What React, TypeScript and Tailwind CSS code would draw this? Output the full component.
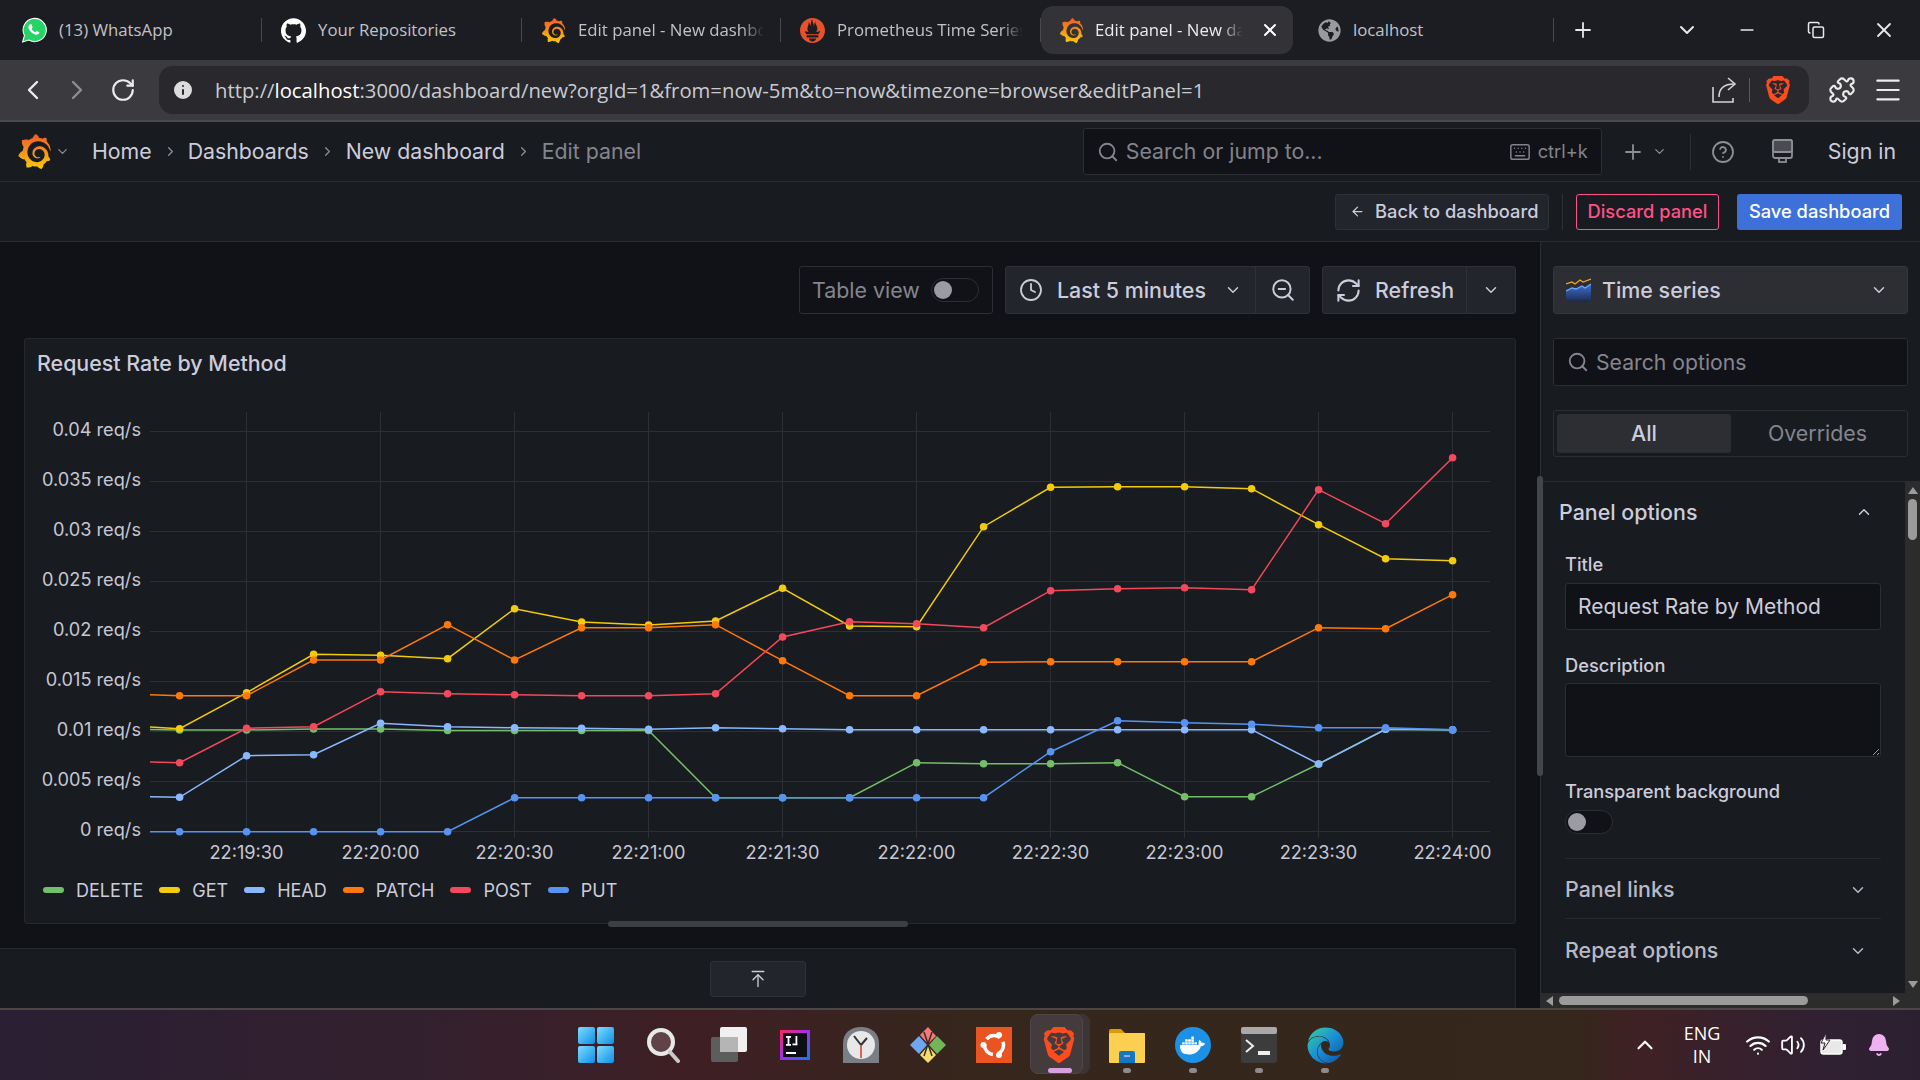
import React from "react";
import { ChevronDown, ChevronLeft, ChevronRight, ChevronUp, RotateCw, Plus, Minus, X, Search, Keyboard, CircleHelp, Puzzle, Menu, Clock, ZoomOut, RefreshCw, ArrowLeft, ArrowUpToLine, Wifi, Volume2, Bell, Info, Copy } from "lucide-react";
import { SiGrafana, SiPrometheus, SiBrave, SiDocker, SiGithub } from "react-icons/si";
import { FaEdge, FaGlobeAmericas } from "react-icons/fa";

const X0 = 179.6;
const DX = 67;
type Series = { name: string; color: string; start: number; ys: number[] };
const series: Series[] = [
  { name: "DELETE", color: "#73bf69", start: 729.5, ys: [730, 730, 729, 729, 730.5, 730.5, 730.5, 730.5, 797.7, 797.7, 797.7, 762.7, 763.7, 763.7, 762.7, 796.7, 796.7, 764, 729.3, 730] },
  { name: "GET", color: "#f2cc0c", start: 727, ys: [728.7, 692.7, 654.3, 655.3, 658.7, 608.7, 622, 625, 621, 588.3, 626, 626.7, 526.7, 487.3, 486.7, 486.7, 488.7, 524.7, 558.7, 560.7] },
  { name: "HEAD", color: "#8ab8ff", start: 796.7, ys: [797.3, 755.7, 754.7, 723.3, 726.7, 727.7, 728.3, 729.3, 727.7, 728.7, 729.7, 729.7, 729.7, 729.7, 729.7, 729.7, 729.7, 764, 729.3, 729.7] },
  { name: "PATCH", color: "#ff780a", start: 694.7, ys: [695.7, 695.7, 660, 660, 624.7, 660, 627.7, 627.7, 624.7, 660.7, 695.7, 695.7, 662.3, 661.7, 661.7, 661.7, 661.7, 627.7, 628.7, 594.7] },
  { name: "POST", color: "#f2495c", start: 762, ys: [762.7, 728.3, 726.7, 691.7, 693.7, 694.7, 695.7, 695.7, 693.7, 637, 621.7, 623.7, 627.7, 590.7, 588.7, 587.7, 589.7, 489.7, 523.7, 457.7] },
  { name: "PUT", color: "#5794f2", start: 831.7, ys: [831.7, 831.7, 831.7, 831.7, 831.7, 797.7, 797.7, 797.7, 797.7, 797.7, 797.7, 797.7, 797.7, 751.7, 720.7, 722.7, 724.3, 727.7, 727.7, 729.7] },
];
const yLabels = ["0.04 req/s", "0.035 req/s", "0.03 req/s", "0.025 req/s", "0.02 req/s", "0.015 req/s", "0.01 req/s", "0.005 req/s", "0 req/s"];
const xLabels = ["22:19:30", "22:20:00", "22:20:30", "22:21:00", "22:21:30", "22:22:00", "22:22:30", "22:23:00", "22:23:30", "22:24:00"];

function Chart() {
  return (
    <svg width={1489} height={470} viewBox="25 400 1489 470" className="block">
      {yLabels.map((l, i) => {
        const y = 431.5 + i * 50;
        return (
          <g key={l}>
            <line x1={150} x2={1490} y1={y} y2={y} stroke="#2c2f33" strokeWidth={1} />
            <text x={141} y={y + 4} textAnchor="end" fontSize={18.2} fill="#c7c7d3" fontFamily="Inter">{l}</text>
          </g>
        );
      })}
      {xLabels.map((l, i) => {
        const x = 246.5 + i * 134;
        return (
          <g key={l}>
            <line x1={x} x2={x} y1={412} y2={838} stroke="#2c2f33" strokeWidth={1} />
            <text x={x} y={859} textAnchor="middle" fontSize={18.2} fill="#c7c7d3" fontFamily="Inter">{l}</text>
          </g>
        );
      })}
      {series.map((s) => {
        const pts = [`150,${s.start}`, ...s.ys.map((y, i) => `${X0 + i * DX},${y}`)].join(" ");
        return (
          <g key={s.name}>
            <polyline points={pts} fill="none" stroke={s.color} strokeWidth={1.5} />
            {s.ys.map((y, i) => <circle key={i} cx={X0 + i * DX} cy={y} r={3.8} fill={s.color} />)}
          </g>
        );
      })}
    </svg>
  );
}

function GrafanaLogo({ size }: { size: number }) {
  return <SiGrafana size={size} className="shrink-0 fill-[url(#grafgrad)]" />;
}

function WhatsAppIcon() {
  return (
    <svg width="26" height="26" viewBox="0 0 24 24">
      <path d="M1.5 23l1.7-6A10.7 10.7 0 1 1 7.2 21.2z" fill="#25d366" stroke="#fff" strokeWidth="1" />
      <path d="M9 6.6c-.6 0-1.1.3-1.5.8-.7.9-.9 2-.4 3.3.8 2.2 2.5 4 4.8 5.1 1.8.8 3.2.7 4.2-.1.5-.4.8-1 .8-1.6l-2.5-1.3-1.1 1.2c-1.5-.5-2.8-1.7-3.5-3.2l.9-1.1L9.8 6.8z" fill="#fff" />
    </svg>
  );
}

function Tab({ icon, label, w, fade, first }: { icon: React.ReactNode; label: string; w: string; fade?: boolean; first?: boolean }) {
  return (
    <div className={`${w} h-full flex items-center relative`}>
      <div className={`w-[68px] shrink-0 flex items-center ${first ? "pl-[21px]" : "pl-[19px]"}`}>{icon}</div>
      <div className={`text-[16.8px] text-[#c2c2c6] whitespace-nowrap overflow-hidden w-[186px] ${first ? "-ml-[9px]" : "-ml-[12px]"} ${fade ? "[mask-image:linear-gradient(to_right,black_88%,transparent)]" : ""}`}>{label}</div>
      <div className="absolute right-0 top-[18px] h-[24px] w-px bg-[#48484c]" />
    </div>
  );
}

function LegendItem({ color, name }: { color: string; name: string }) {
  return (
    <div className="flex items-center gap-[12px]">
      <span className="w-[21px] h-[6px] rounded-full" style={{ backgroundColor: color }} />
      <span>{name}</span>
    </div>
  );
}

function TbIcon({ children }: { children: React.ReactNode }) {
  return <div className="w-[66.3px] h-full flex items-center justify-center relative shrink-0">{children}</div>;
}
const Dot = () => <span className="absolute left-1/2 -ml-[4px] top-[58px] w-[8px] h-[5px] rounded-full bg-[#8f8a8c]" />;

function Taskbar() {
  return (
    <div className="h-[72px] shrink-0 border-t-2 border-[#4c4646] flex items-center pl-[563px] bg-[linear-gradient(90deg,#2a1f33_0%,#33202e_22%,#3e1f24_36%,#36261c_50%,#35271b_82%,#3f2124_85%,#302032_95%,#2c2030_100%)]">
      <TbIcon>
        <svg width="36" height="36" viewBox="0 0 36 36"><defs><linearGradient id="wing" x1="0" y1="0" x2="1" y2="1"><stop offset="0" stopColor="#7ddcff" /><stop offset="1" stopColor="#0f8fe8" /></linearGradient></defs><rect x="0" y="0" width="17" height="17" rx="2" fill="url(#wing)" /><rect x="19" y="0" width="17" height="17" rx="2" fill="url(#wing)" /><rect x="0" y="19" width="17" height="17" rx="2" fill="url(#wing)" /><rect x="19" y="19" width="17" height="17" rx="2" fill="url(#wing)" /></svg>
      </TbIcon>
      <TbIcon>
        <svg width="36" height="36" viewBox="0 0 36 36" className="ml-[3px]"><circle cx="15" cy="15" r="12" fill="#5f4348" stroke="#e8e8e8" strokeWidth="4" /><line x1="24" y1="25" x2="32" y2="34" stroke="#c9c9c9" strokeWidth="4" strokeLinecap="round" /></svg>
      </TbIcon>
      <TbIcon>
        <svg width="36" height="36" viewBox="0 0 36 36"><rect x="0" y="10" width="27" height="25" rx="2" fill="#5d5d5d" /><rect x="9" y="0" width="27" height="25" rx="2" fill="#f0f0f0" /><rect x="9" y="10" width="18" height="15" fill="#b5b5b5" /></svg>
      </TbIcon>
      <TbIcon>
        <svg width="30" height="30" viewBox="0 0 30 30"><defs><linearGradient id="ijg" x1="0" y1="0" x2="1" y2="1"><stop offset="0" stopColor="#fe2857" /><stop offset="0.5" stopColor="#a12ff0" /><stop offset="1" stopColor="#087cfa" /></linearGradient></defs><rect width="30" height="30" fill="url(#ijg)" /><rect x="3" y="3" width="24" height="24" fill="#0d0d14" /><rect x="6" y="6" width="5" height="1.8" fill="#fff" /><rect x="7.6" y="6" width="1.8" height="9" fill="#fff" /><rect x="6" y="14" width="5" height="1.8" fill="#fff" /><rect x="15.5" y="6" width="1.8" height="9" fill="#fff" /><rect x="12.5" y="13.5" width="4.8" height="1.8" fill="#fff" /><rect x="6" y="22" width="10" height="2" fill="#fff" /></svg>
      </TbIcon>
      <TbIcon>
        <svg width="36" height="36" viewBox="0 0 36 36"><path d="M0 36V16C0 6 8 0 18 0s18 6 18 16v20z" fill="#7a7f85" /><circle cx="18" cy="18" r="14" fill="#e8e8e8" /><path d="M18 18L11 9M18 18l6-7" stroke="#333" strokeWidth="2" /><path d="M18 18v13" stroke="#d9442b" strokeWidth="1.6" /></svg>
      </TbIcon>
      <TbIcon>
        <svg width="36" height="36" viewBox="0 0 36 36"><path d="M18 0l8 9-8 8-8-9z" fill="#f27a7a" /><path d="M27 9l9 9-9 9-8-9z" fill="#74b45a" /><path d="M18 19l8 9-8 8-8-8z" fill="#f4dd70" /><path d="M9 9l8 9-8 9-9-9z" fill="#6fa6f0" /><path d="M14 5l8 24" stroke="#3a2a22" strokeWidth="1.5" /><path d="M22 5l-8 24" stroke="#3a2a22" strokeWidth="1.5" /></svg>
      </TbIcon>
      <TbIcon>
        <svg width="36" height="36" viewBox="0 0 36 36"><rect width="36" height="36" fill="#e95420" /><circle cx="18" cy="18" r="9.5" fill="none" stroke="#fff" strokeWidth="3.5" strokeDasharray="15 5" strokeDashoffset="4" /><circle cx="7.5" cy="18" r="3" fill="#fff" /><circle cx="23" cy="8" r="3" fill="#fff" /><circle cx="23" cy="28" r="3" fill="#fff" /></svg>
      </TbIcon>
      <TbIcon>
        <div className="absolute left-[10px] top-[4px] w-[53px] h-[60px] rounded-[8px] bg-[#3c3536]" />
        <div className="absolute left-[3px] top-[4px] w-[53px] h-[60px] rounded-[8px] bg-[#443c3c] border border-[#4f4647]" />
        <SiBrave size={36} color="#fb4c1f" className="relative -ml-[2px]" />
        <span className="absolute left-[21px] top-[58px] w-[24px] h-[5px] rounded-full bg-[#d9a0e0]" />
      </TbIcon>
      <TbIcon>
        <svg width="36" height="36" viewBox="0 0 36 36"><path d="M0 4a2 2 0 012-2h10l4 4h20v6H0z" fill="#d89b0a" /><rect y="6" width="36" height="30" rx="1" fill="#fbcf4f" /><path d="M10 26a2 2 0 012-2h12a2 2 0 012 2v10H10z" fill="#1576c4" /><rect x="15" y="28" width="6" height="2" fill="#9ad" /></svg>
        <Dot />
      </TbIcon>
      <TbIcon>
        <div className="w-[36px] h-[36px] rounded-full bg-[#1d91e6] flex items-center justify-center"><SiDocker size={25} color="#fff" /></div>
        <Dot />
      </TbIcon>
      <TbIcon>
        <svg width="36" height="36" viewBox="0 0 36 36"><rect y="0" width="36" height="36" rx="3" fill="#3c3c3c" /><rect y="0" width="36" height="7" rx="2" fill="#a9a9a9" /><path d="M5 13l7 6-7 6" fill="none" stroke="#eee" strokeWidth="2" /><rect x="17" y="24" width="12" height="4" fill="#eee" /></svg>
        <Dot />
      </TbIcon>
      <TbIcon>
        <FaEdge size={37} className="fill-[url(#edgeg)]" />
        <Dot />
      </TbIcon>
      <div className="ml-auto flex items-center h-full text-white">
        <ChevronUp size={26} strokeWidth={2} className="mr-[17px]" />
        <div className="text-[18px] leading-[23px] text-center font-['Open_Sans'] w-[54px] mr-[16px]"><div>ENG</div><div>IN</div></div>
        <Wifi size={26} className="mr-[9px]" />
        <Volume2 size={26} strokeWidth={1.7} className="mr-[13px]" />
        <svg width="28" height="24" viewBox="0 0 28 24" className="mr-[20px]">
          <rect x="2" y="7" width="21" height="14" rx="2.5" fill="#e9e9e9" stroke="#fff" strokeWidth="1.5" />
          <rect x="23.5" y="11" width="3.5" height="6" rx="1" fill="#fff" />
          <path d="M7 0L2 10h4l-2 7 7-10H7z" fill="#fff" stroke="#33232b" strokeWidth="1" />
        </svg>
        <Bell size={24} fill="#efb2f0" color="#efb2f0" className="mr-[29px]" />
      </div>
    </div>
  );
}

function Field({ label, children, mt }: { label: string; children: React.ReactNode; mt: string }) {
  return (
    <div className={mt}>
      <div className="text-[18.3px] h-[24px] leading-[22px] font-medium text-[#ccccdc]">{label}</div>
      {children}
    </div>
  );
}

export default function App() {
  return (
    <div className="w-[1920px] h-[1080px] overflow-hidden flex flex-col bg-[#111217] font-['Inter',sans-serif] text-[#ccccdc] relative">
      <svg width="0" height="0" className="absolute">
        <defs>
          <linearGradient id="grafgrad" x1="0" y1="0" x2="0" y2="1"><stop offset="0" stopColor="#f05a28" /><stop offset="1" stopColor="#fbca0a" /></linearGradient>
          <linearGradient id="edgeg" x1="0" y1="0" x2="1" y2="1"><stop offset="0" stopColor="#36d1a0" /><stop offset="0.5" stopColor="#1a8fd6" /><stop offset="1" stopColor="#0c4f9c" /></linearGradient>
        </defs>
      </svg>

      {/* Browser tabs */}
      <div className="h-[60px] shrink-0 bg-[#1c1d22] flex items-center font-['Open_Sans',sans-serif]">
        <Tab w="w-[262px]" first icon={<WhatsAppIcon />} label="(13) WhatsApp" />
        <Tab w="w-[260px]" icon={<SiGithub size={25} color="#fff" />} label="Your Repositories" />
        <Tab w="w-[259px]" fade icon={<GrafanaLogo size={25} />} label="Edit panel - New dashboard" />
        <Tab w="w-[260px]" fade icon={<SiPrometheus size={25} color="#e6522c" />} label="Prometheus Time Series" />
        <div className="w-[252px] h-[48px] rounded-[12px] bg-[#323237] flex items-center relative">
          <div className="pl-[18px] w-[54px] shrink-0"><GrafanaLogo size={25} /></div>
          <div className="text-[16.8px] text-[#ececee] whitespace-nowrap overflow-hidden w-[148px] mr-[4px] [mask-image:linear-gradient(to_right,black_85%,transparent)]">Edit panel - New dashboard</div>
          <X size={20} strokeWidth={2.4} className="ml-[13px] text-white" />
        </div>
        <div className="w-[261px] h-full flex items-center relative">
          <div className="pl-[25px] w-[60px] shrink-0"><FaGlobeAmericas size={23} color="#9a9a9e" /></div>
          <div className="text-[16.8px] text-[#c2c2c6]">localhost</div>
          <div className="absolute right-0 top-[18px] h-[24px] w-px bg-[#48484c]" />
        </div>
        <Plus size={24} strokeWidth={1.8} className="ml-[17px] text-[#e8e8e8]" />
        <ChevronDown size={24} strokeWidth={2} className="ml-[80px] text-[#e8e8e8]" />
        <Minus size={20} strokeWidth={2} className="ml-[38px] text-[#e8e8e8]" />
        <Copy size={18} strokeWidth={2} className="ml-[50px] text-[#e8e8e8]" />
        <X size={24} strokeWidth={1.8} className="ml-[47px] text-[#e8e8e8]" />
      </div>

      {/* Browser toolbar */}
      <div className="h-[62px] shrink-0 bg-[#3a3a3f] border-b-2 border-[#4a4a4e] flex items-center font-['Open_Sans',sans-serif]">
        <ChevronLeft size={32} strokeWidth={1.8} className="ml-[17px] text-[#ececec]" />
        <ChevronRight size={32} strokeWidth={1.8} className="ml-[12px] text-[#8e8e92]" />
        <RotateCw size={26} strokeWidth={2} className="ml-[17px] text-[#ececec]" />
        <div className="ml-[23px] w-[1650px] h-[48px] rounded-[14px] bg-[#28282d] flex items-center">
          <Info size={24} fill="#dcdcdc" color="#28282d" className="ml-[12px]" />
          <div className="ml-[20px] text-[20.3px] whitespace-nowrap text-[#c8ccd2] flex-1">http://<span className="text-[#ffffff]">localhost</span>:3000/dashboard/new?orgId=1&amp;from=now-5m&amp;to=now&amp;timezone=browser&amp;editPanel=1</div>
          <svg width="28" height="28" viewBox="0 0 28 28" fill="none" stroke="#d4d4d4" strokeWidth="1.6">
            <path d="M3 11v15h20v-4" />
            <path d="M9 21c0-8 5-13 15-13" />
            <path d="M18 2l7 6-7 6" />
          </svg>
          <div className="ml-[11px] w-px h-[24px] bg-[#59595d]" />
          <SiBrave size={28} color="#fb4c1f" className="ml-[14px] mr-[17px]" />
        </div>
        <Puzzle size={28} strokeWidth={1.8} className="ml-[19px] text-[#ececec]" />
        <Menu size={32} strokeWidth={1.6} className="ml-[16px] text-[#ececec]" />
      </div>

      {/* Grafana nav */}
      <div className="h-[60px] shrink-0 bg-[#181b1f] border-b border-[#2a2c31] flex items-center text-[21.3px]">
        <div className="ml-[17px]"><GrafanaLogo size={35} /></div>
        <ChevronDown size={15} className="ml-[3px] text-[#8e8e95]" />
        <span className="ml-[22px] text-[#ccccdc]">Home</span>
        <ChevronRight size={15} className="mx-[11px] text-[#8e8e95]" />
        <span className="-ml-px text-[#ccccdc]">Dashboards</span>
        <ChevronRight size={15} className="mx-[11px] text-[#8e8e95]" />
        <span className="text-[#ccccdc]">New dashboard</span>
        <ChevronRight size={15} className="mx-[11px] text-[#8e8e95]" />
        <span className="text-[#85858f]">Edit panel</span>
        <div className="ml-auto w-[519px] h-[47px] mr-[19px] bg-[#111217] border border-[#2c2e33] rounded-[3px] flex items-center px-[13px] text-[#83838b]">
          <Search size={22} className="shrink-0" />
          <span className="ml-[7px] flex-1">Search or jump to...</span>
          <Keyboard size={22} strokeWidth={1.6} className="mr-[7px]" />
          <span className="text-[18.3px]">ctrl+k</span>
        </div>
        <Plus size={24} strokeWidth={1.8} className="text-[#8e8e95]" />
        <ChevronDown size={15} className="ml-[7px] mr-[23px] text-[#8e8e95]" />
        <div className="w-px h-[36px] bg-[#2f3136]" />
        <CircleHelp size={24} strokeWidth={1.8} className="ml-[20px] text-[#8e8e95]" />
        <svg width="25" height="27" viewBox="0 0 25 27" fill="none" stroke="#8e8e95" strokeWidth="1.8" className="ml-[35px]">
          <rect x="3" y="2" width="19" height="18" rx="2" />
          <rect x="3" y="2" width="19" height="12" rx="2" fill="#4a4c52" />
          <rect x="9" y="20" width="7" height="4" />
        </svg>
        <span className="ml-[33px] mr-[24px] text-[#ccccdc]">Sign in</span>
      </div>

      {/* Action row */}
      <div className="h-[60px] shrink-0 bg-[#181b1f] border-b border-[#2a2c31] flex items-center justify-end pr-[18px] text-[18.3px] font-medium">
        <div className="w-[214px] h-[36px] bg-[#22252b] border border-[#2f3136] rounded-[3px] flex items-center pl-[14px] text-[#ccccdc]">
          <ArrowLeft size={15} className="mr-[10px]" />Back to dashboard
        </div>
        <div className="w-px h-[36px] bg-[#2f3136] mx-[13px]" />
        <div className="w-[143px] h-[36px] border border-[#ff5286] rounded-[3px] flex items-center justify-center text-[#ff5286]">Discard panel</div>
        <div className="ml-[18px] w-[165px] h-[36px] bg-[#3d71d9] rounded-[3px] flex items-center justify-center text-white">Save dashboard</div>
      </div>

      {/* Main */}
      <div className="flex-1 min-h-0 flex">
        <div className="w-[1540px] shrink-0 flex flex-col pl-[24px] pr-[24px] pt-[24px] relative">
          <div className="h-[48px] shrink-0 flex justify-end text-[21.4px]">
            <div className="w-[194px] border border-[#2c2e33] rounded-[3px] flex items-center pl-[12px] pt-[1px] text-[#85858f]">
              Table view
              <div className="ml-[11px] -mt-[1px] w-[48px] h-[24px] rounded-full border border-[#2c2e33] bg-[#111217] relative shrink-0">
                <span className="absolute left-[2px] top-[2px] w-[18px] h-[18px] rounded-full bg-[#9b9ba3]" />
              </div>
            </div>
            <div className="ml-[12px] w-[305px] bg-[#22252b] border border-[#2f3136] rounded-[3px] flex items-center font-medium">
              <Clock size={24} strokeWidth={1.8} className="ml-[13px]" />
              <span className="ml-[14px] pt-[1px]">Last 5 minutes</span>
              <ChevronDown size={18} strokeWidth={2} className="ml-[18px]" />
              <div className="ml-[13px] w-px h-full bg-[#2f3136]" />
              <ZoomOut size={26} strokeWidth={1.8} className="ml-[14px]" />
            </div>
            <div className="ml-[12px] w-[194px] bg-[#22252b] border border-[#2f3136] rounded-[3px] flex items-center font-medium">
              <RefreshCw size={27} strokeWidth={1.8} className="ml-[12px]" />
              <span className="ml-[13px] pt-[1px]">Refresh</span>
              <div className="ml-[12px] w-px h-full bg-[#2f3136]" />
              <ChevronDown size={18} strokeWidth={2} className="ml-[15px]" />
            </div>
          </div>

          <div className="mt-[24px] h-[586px] shrink-0 bg-[#181b1f] border border-[#26282d] rounded-[3px]">
            <div className="h-[61px] pl-[12px] pt-[11px] text-[21.4px] leading-[26px] font-medium">Request Rate by Method</div>
            <Chart />
            <div className="pl-[18px] h-[40px] flex items-center gap-[16px] text-[18px]">
              {series.map((s) => <LegendItem key={s.name} color={s.color} name={s.name} />)}
            </div>
          </div>

          <div className="mt-[24px] -ml-[24px] flex-1 bg-[#181b1f] border-t border-r border-[#26282d] rounded-tr-[3px] pt-[12px] flex justify-center">
            <div className="w-[96px] h-[36px] bg-[#22252b] border border-[#2f3136] rounded-[3px] flex items-center justify-center">
              <ArrowUpToLine size={20} strokeWidth={1.6} />
            </div>
          </div>

          <div className="absolute left-[608px] top-[679px] w-[300px] h-[6px] rounded-full bg-[#3e3f43]" />
          <div className="absolute left-[1537px] top-[234px] w-[6px] h-[300px] rounded-full bg-[#45464a] z-10" />
        </div>

        {/* Sidebar */}
        <div className="w-[380px] shrink-0 bg-[#181b1f] border-l border-[#2a2c31] flex flex-col">
          <div className="px-[12px] pt-[24px] shrink-0 h-[240px] border-b border-[#2a2c31]">
            <div className="h-[48px] bg-[#2c2e33] border border-[#34363b] rounded-[3px] flex items-center pl-[12px] text-[21.4px] font-medium">
              <svg width="25" height="24" viewBox="0 0 25 24" className="shrink-0">
                <defs><linearGradient id="tsg" x1="0" y1="0" x2="0" y2="1"><stop offset="0" stopColor="#3d71d9" /><stop offset="1" stopColor="#1c2a4a" /></linearGradient></defs>
                <path d="M0 13l6-3 4 1 6-3 3 2 6-4v18H0z" fill="url(#tsg)" />
                <path d="M0 6l6-2 3 2 5-4 3 2 8-3" fill="none" stroke="#f5a623" strokeWidth="1.3" />
                <path d="M0 13l6-3 4 1 6-3 3 2 6-4" fill="none" stroke="#6ea6ff" strokeWidth="1.3" />
              </svg>
              <span className="ml-[11px] pt-[1px]">Time series</span>
              <ChevronDown size={18} strokeWidth={2} className="ml-auto mr-[19px]" />
            </div>
            <div className="mt-[24px] h-[48px] bg-[#111217] border border-[#2c2e33] rounded-[3px] flex items-center pl-[13px] text-[21.2px] text-[#85858f]">
              <Search size={22} className="mr-[7px]" /><span className="pt-[1px]">Search options</span>
            </div>
            <div className="mt-[24px] h-[47px] border border-[#2c2e33] rounded-[3px] p-[3px] flex text-[21.4px]">
              <div className="w-[174px] bg-[#2c2e33] rounded-[3px] flex items-center justify-center font-medium">All</div>
              <div className="flex-1 flex items-center justify-center text-[#85858f]">Overrides</div>
            </div>
          </div>

          <div className="flex-1 min-h-0 flex">
            <div className="flex-1 pl-[24px] pr-[24px] min-w-0">
              <div className="h-[60px] -ml-[6px] flex items-center text-[21.4px] font-medium">
                Panel options
                <ChevronUp size={18} strokeWidth={2} className="ml-auto mr-[8px]" />
              </div>
              <Field label="Title" mt="mt-[11px]">
                <div className="mt-[6px] h-[47px] bg-[#111217] border border-[#2c2e33] rounded-[3px] flex items-center pl-[12px] text-[21px]">Request Rate by Method</div>
              </Field>
              <Field label="Description" mt="mt-[24px]">
                <textarea readOnly className="mt-[5px] block w-full h-[74px] bg-[#111217] border border-[#2c2e33] rounded-[3px] [color-scheme:dark] outline-none" />
              </Field>
              <Field label="Transparent background" mt="mt-[23px]">
                <div className="mt-[6px] w-[48px] h-[24px] rounded-full border border-[#2c2e33] bg-[#111217] relative">
                  <span className="absolute left-[2px] top-[2px] w-[18px] h-[18px] rounded-full bg-[#9b9ba3]" />
                </div>
              </Field>
              <div className="mt-[24px] border-t border-[#26282d] h-[61px] border-b pt-[2px] flex items-center text-[21.4px] font-medium text-[#b9b9c6]">
                Panel links
                <ChevronDown size={18} strokeWidth={2} className="ml-auto mr-[14px]" />
              </div>
              <div className="h-[60px] pt-[3px] flex items-center text-[21.4px] font-medium text-[#b9b9c6]">
                Repeat options
                <ChevronDown size={18} strokeWidth={2} className="ml-auto mr-[14px]" />
              </div>
            </div>
            <div className="w-[15px] shrink-0 bg-[#2c2c2c] relative">
              <div className="absolute left-[2px] top-[5px] w-0 h-0 border-l-[5px] border-r-[5px] border-b-[7px] border-l-transparent border-r-transparent border-b-[#9b9b9b] ml-px" />
              <div className="absolute left-[3px] top-[17px] w-[9px] h-[41px] rounded-full bg-[#9b9b9b]" />
              <div className="absolute left-[2px] bottom-[5px] w-0 h-0 border-l-[5px] border-r-[5px] border-t-[7px] border-l-transparent border-r-transparent border-t-[#9b9b9b] ml-px" />
            </div>
          </div>

          <div className="h-[15px] shrink-0 bg-[#2c2c2c] relative">
            <div className="absolute left-[5px] top-[3px] w-0 h-0 border-t-[5px] border-b-[5px] border-r-[7px] border-t-transparent border-b-transparent border-r-[#9b9b9b]" />
            <div className="absolute left-[18px] top-[3px] w-[249px] h-[9px] rounded-full bg-[#9b9b9b]" />
            <div className="absolute left-[352px] top-[3px] w-0 h-0 border-t-[5px] border-b-[5px] border-l-[7px] border-t-transparent border-b-transparent border-l-[#9b9b9b]" />
          </div>
        </div>
      </div>

      <Taskbar />
    </div>
  );
}
